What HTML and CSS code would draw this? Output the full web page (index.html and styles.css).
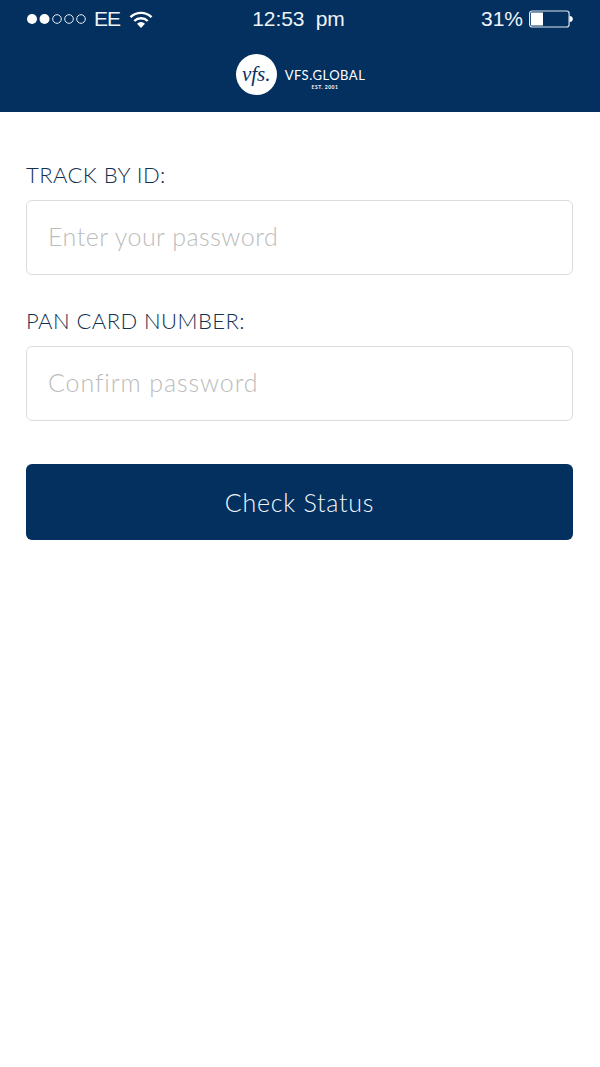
FILE: index.html
```html
<!DOCTYPE html>
<html lang="en">
<head>
    <meta charset="UTF-8">
    <meta name="viewport" content="width=device-width, initial-scale=1.0">
    <title>Track Status</title>
    <link rel="stylesheet" href="styles.css">
</head>
<body>
    <header class="header">
        <div class="status-bar">
            <div class="status-left">
                <svg class="signal" width="60" height="12" viewBox="0 0 60 12">
                    <circle cx="6" cy="6" r="5" fill="#fff"/>
                    <circle cx="18.5" cy="6" r="5" fill="#fff"/>
                    <circle cx="31" cy="6" r="4.3" fill="none" stroke="#e8eef5" stroke-width="1"/>
                    <circle cx="43" cy="6" r="4.3" fill="none" stroke="#e8eef5" stroke-width="1"/>
                    <circle cx="55" cy="6" r="4.3" fill="none" stroke="#e8eef5" stroke-width="1"/>
                </svg>
                <span class="carrier">EE</span>
                <svg class="wifi" width="24" height="17" viewBox="0 0 24 17">
                    <path d="M1.5 6.2a15 15 0 0 1 21 0" fill="none" stroke="#fff" stroke-width="2.4"/>
                    <path d="M5.3 10a9.6 9.6 0 0 1 13.4 0" fill="none" stroke="#fff" stroke-width="2.4"/>
                    <path d="M8 12.8a5.6 5.6 0 0 1 8 0L12 17z" fill="#fff"/>
                </svg>
            </div>
            <span class="clock">12:53&nbsp; pm</span>
            <div class="status-right">
                <span class="percent">31%</span>
                <svg class="battery" width="44" height="18" viewBox="0 0 44 18">
                    <rect x="0.6" y="1" width="39.5" height="16" rx="2.5" fill="none" stroke="#dfe7f0" stroke-width="1.2"/>
                    <rect x="2" y="2.5" width="12" height="13" fill="#fff"/>
                    <path d="M40.5 6c2.6 0 3.3 1.5 3.3 3s-.7 3-3.3 3z" fill="#fff"/>
                </svg>
            </div>
        </div>
        <div class="logo">
            <div class="logo-badge">vfs.</div>
            <div class="logo-text">
                <span class="logo-name">VFS.GLOBAL</span>
                <span class="logo-est">EST. 2001</span>
            </div>
        </div>
    </header>

    <main class="form">
        <label class="field-label" for="track-id">TRACK BY ID:</label>
        <input class="field-input" id="track-id" type="text" placeholder="Enter your password">

        <label class="field-label" for="pan-number">PAN CARD NUMBER:</label>
        <input class="field-input field-input-wide" id="pan-number" type="text" placeholder="Confirm password">

        <button class="submit" type="button">Check Status</button>
    </main>
</body>
</html>
```

FILE: styles.css
```css
* {
    box-sizing: border-box;
}
body {
    margin: 0;
    background-color: #fff;
    font-family: Lato, "Liberation Sans", sans-serif;
}
.header {
    height: 112px;
    padding-top: 1px;
    background-color: #03305f;
    color: #fff;
}
.status-bar {
    display: grid;
    grid-template-columns: 1fr auto 1fr;
    align-items: center;
    height: 36px;
    padding: 0 27px 0 26px;
    font-family: "Liberation Sans", sans-serif;
    font-size: 21px;
    color: #eef3f8;
}
.status-left {
    display: flex;
    align-items: center;
}
.carrier {
    margin-left: 8px;
    letter-spacing: -1px;
}
.wifi {
    margin-left: 9px;
}
.clock {
    margin-left: -2px;
    letter-spacing: -0.1px;
}
.status-right {
    display: flex;
    align-items: center;
    justify-content: flex-end;
    gap: 6px;
}
.logo {
    display: flex;
    align-items: flex-start;
    justify-content: center;
    gap: 8px;
    margin-top: 17px;
    padding-left: 1px;
}
.logo-badge {
    width: 41px;
    height: 41px;
    border-radius: 50%;
    background-color: #fff;
    color: #03305f;
    font-family: "Liberation Serif", serif;
    font-size: 21px;
    font-style: italic;
    line-height: 40px;
    text-align: center;
}
.logo-text {
    display: flex;
    flex-direction: column;
    align-items: center;
    margin-top: 13px;
}
.logo-name {
    font-size: 13px;
    line-height: 16px;
    letter-spacing: 0.5px;
}
.logo-est {
    font-size: 5px;
    font-weight: 700;
    line-height: 8px;
    letter-spacing: 0.5px;
}
.form {
    display: flex;
    flex-direction: column;
    padding: 50px 27px 0 26px;
}
.field-label {
    height: 38px;
    font-size: 22px;
    font-weight: 300;
    line-height: 26px;
    letter-spacing: 0.45px;
    color: #12304f;
}
.field-input {
    width: 100%;
    height: 75px;
    margin-bottom: 33px;
    padding: 0 21px 4px;
    border: 1px solid #dcdcdc;
    border-radius: 6px;
    outline: none;
    background-color: #fff;
    font-family: inherit;
    font-size: 25px;
    font-weight: 300;
    letter-spacing: 0.5px;
}
.field-input-wide {
    letter-spacing: 0.9px;
}
.field-input::placeholder {
    color: #bcbcbc;
    opacity: 1;
}
.submit {
    height: 76px;
    margin-top: 10px;
    border: 0;
    border-radius: 6px;
    background-color: #03305f;
    color: #f2f6fa;
    font-family: inherit;
    font-size: 25px;
    font-weight: 300;
    letter-spacing: 0.75px;
}
```
